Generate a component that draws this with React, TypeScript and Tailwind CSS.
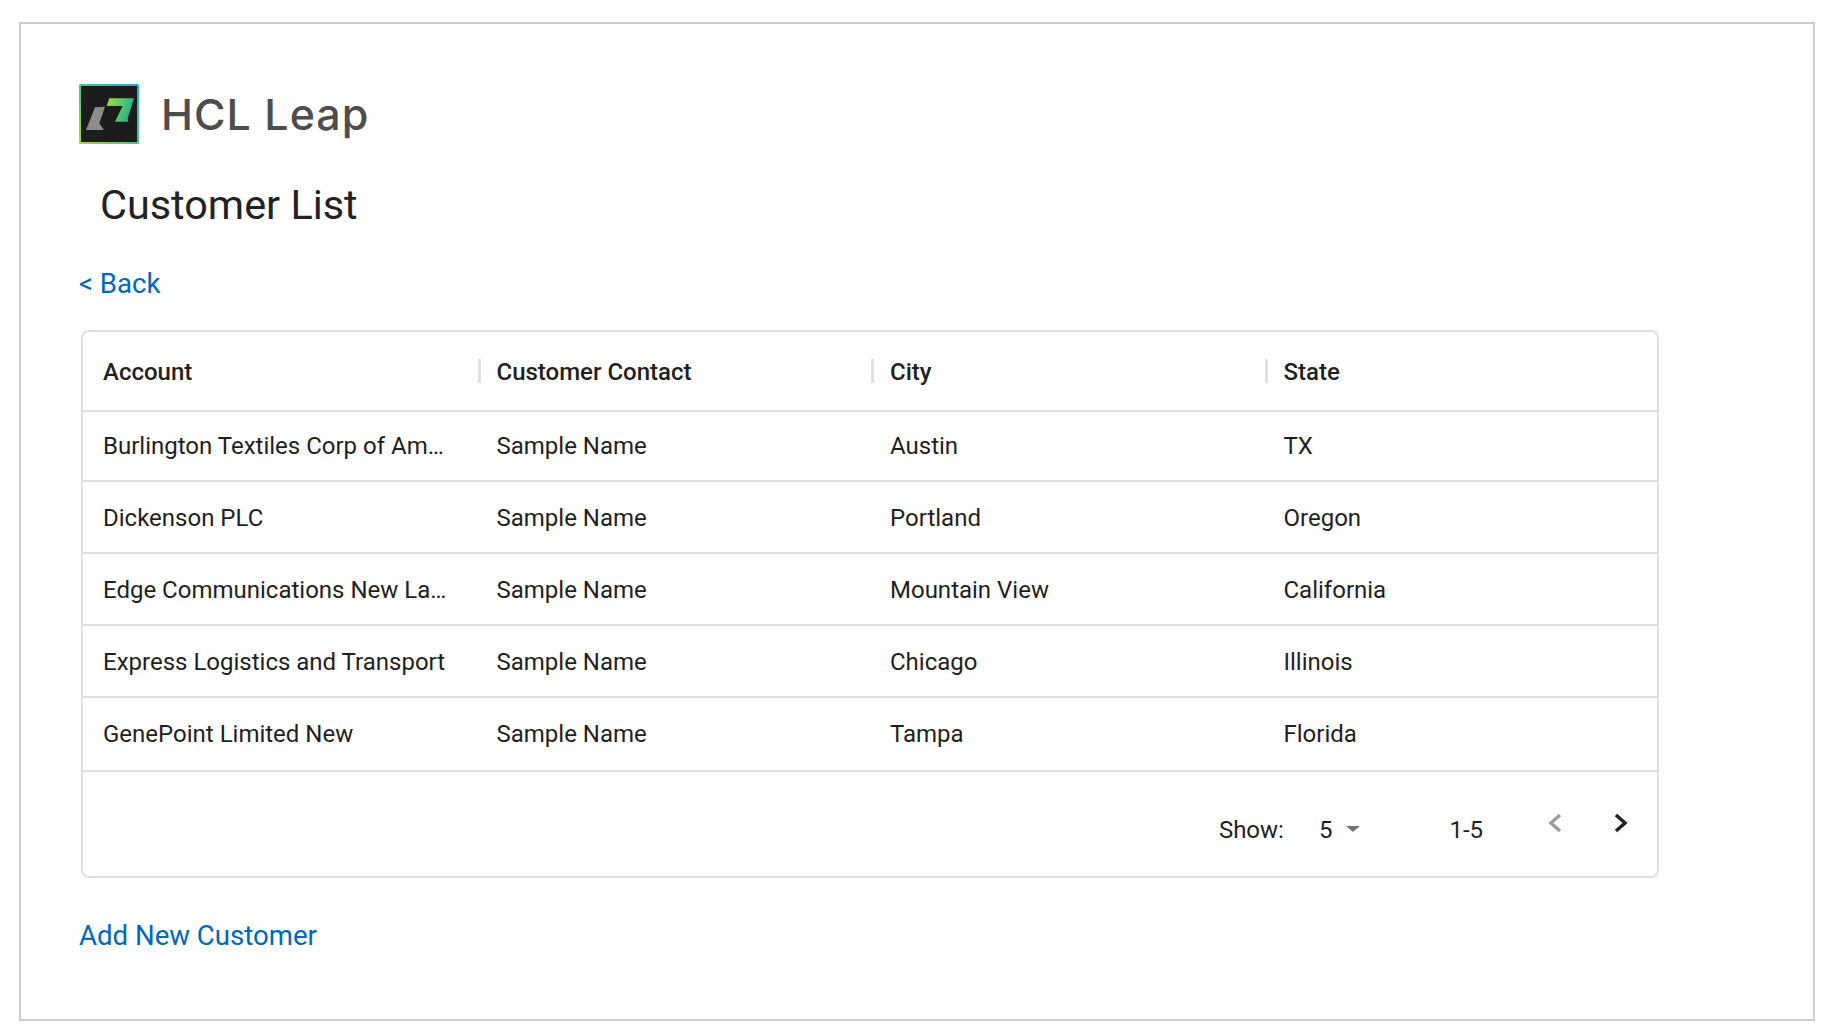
import React from "react";

const rows = [
  ["Burlington Textiles Corp of America", "Sample Name", "Austin", "TX"],
  ["Dickenson PLC", "Sample Name", "Portland", "Oregon"],
  ["Edge Communications New Lab Group", "Sample Name", "Mountain View", "California"],
  ["Express Logistics and Transport", "Sample Name", "Chicago", "Illinois"],
  ["GenePoint Limited New", "Sample Name", "Tampa", "Florida"],
];
const rowStyles = ["h-[70px]", "h-[72px] pt-[2px]", "h-[72px] pt-[2px]", "h-[72px] pt-[2px]", "h-[74px]"];

function Logo() {
  return (
    <svg width="60" height="60" viewBox="0 0 60 60" className="shrink-0">
      <defs>
        <linearGradient id="frame" x1="0" y1="1" x2="1" y2="0">
          <stop offset="0" stopColor="#b5d334" />
          <stop offset="0.5" stopColor="#4cc38a" />
          <stop offset="1" stopColor="#12b5cb" />
        </linearGradient>
        <linearGradient id="green" x1="0" y1="0" x2="1" y2="0.3">
          <stop offset="0" stopColor="#a6d93f" />
          <stop offset="1" stopColor="#1fb58f" />
        </linearGradient>
      </defs>
      <rect x="0" y="0" width="60" height="60" rx="1.5" fill="url(#frame)" />
      <rect x="2" y="2" width="56" height="56" fill="#1c1c1c" />
      <polygon points="16,23.3 26,22.7 20.3,39.3 25,46 7,46" fill="#8c8c8c" />
      <polygon points="30.3,14.3 55,14.3 48.7,34.3 49.3,37.7 36,37.7 43.7,22 27.7,22" fill="url(#green)" />
    </svg>
  );
}

export default function App() {
  return (
    <div className="min-h-[1036px] bg-white pl-[19px] pt-[22px] font-['Roboto',sans-serif] text-[#1f1f1f]">
      <div className="h-[999px] w-[1796px] border-2 border-[#cccccc] pl-[58px] pt-[60px]">
        <div className="flex h-[60px] items-center gap-[22px]">
          <Logo />
          <span className="font-['Inter',sans-serif] text-[43px] font-medium leading-none tracking-[1px] text-[#4d4d4d]">HCL Leap</span>
        </div>
        <h1 className="ml-[21px] mt-[36px] text-[41.4px] leading-[50px] font-normal text-[#222222]">Customer List</h1>
        <a className="mt-[37px] block text-[27.6px] leading-[34px] text-[#0067b9]">&lt; Back</a>
        <div className="ml-[2px] mt-[29px] w-[1578px] rounded-[8px] border-2 border-[#e0e0e0]">
          <div className="flex h-[80px] items-center border-b-2 border-[#e0e0e0] text-[24px] font-medium">
            {["Account", "Customer Contact", "City", "State"].map((h, i) => (
              <div key={h} className="flex h-[24px] w-[393.5px] items-center">
                {i > 0 ? <span className="ml-[1px] mr-[16px] h-[24px] w-[3px] bg-[#e0e0e0]" /> : <span className="w-[20px]" />}
                <span className="pt-[2px]">{h}</span>
              </div>
            ))}
          </div>
          {rows.map((r, idx) => (
            <div key={r[0]} className={`flex items-center border-b-2 border-[#e0e0e0] text-[24px] ${rowStyles[idx]}`}>
              {r.map((c, i) => (
                <div key={i} className={`w-[393.5px] truncate pl-[20px] ${i === 0 ? "pr-[30px]" : ""}`}>{c}</div>
              ))}
            </div>
          ))}
          <div className="flex h-[104px] items-center justify-end pt-[12px] text-[24px]">
            <span>Show:</span>
            <span className="ml-[35px]">5</span>
            <span className="ml-[14px] mb-[2px] h-0 w-0 border-x-[7px] border-t-[6px] border-x-transparent border-t-[#757575]" />
            <span className="ml-[89px]">1-5</span>
            <svg width="16" height="24" viewBox="0 0 16 24" className="ml-[64px] mb-[14px]" fill="none" stroke="#9e9e9e" strokeWidth="3.5">
              <path d="M13 4 L4 12 L13 20" />
            </svg>
            <svg width="16" height="24" viewBox="0 0 16 24" className="ml-[50px] mr-[28px] mb-[14px]" fill="none" stroke="#222222" strokeWidth="3.5">
              <path d="M3 4 L12 12 L3 20" />
            </svg>
          </div>
        </div>
        <a className="mt-[41px] block text-[27.6px] leading-[34px] text-[#0067b9]">Add New Customer</a>
      </div>
    </div>
  );
}
